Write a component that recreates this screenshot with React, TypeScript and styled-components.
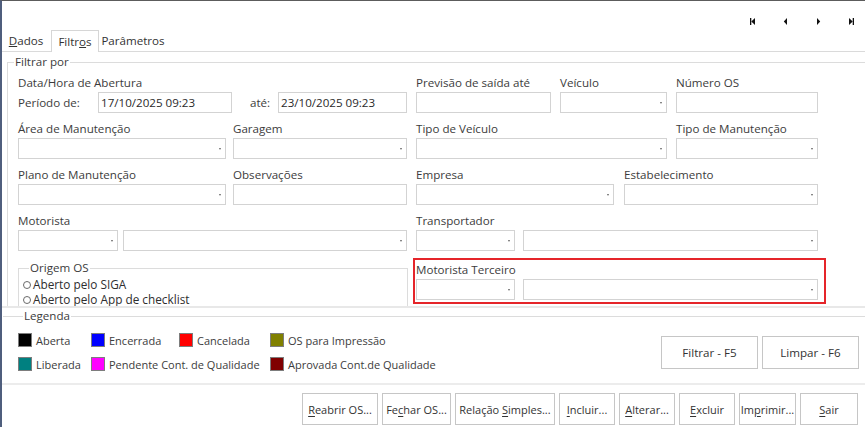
import React from "react";
import styled, { createGlobalStyle } from "styled-components";

const Global = createGlobalStyle`
  html, body { margin: 0; padding: 0; background: #fff; }
  body {
    font-family: "Open Sans", "Noto Sans", sans-serif;
    font-size: 11.6px;
    color: #3c3c3c;
  }
  * { box-sizing: border-box; }
`;

const Window = styled.div`
  width: 865px;
  height: 427px;
  overflow: hidden;
  background: #fff;
  border-top: 1px solid #5c5c5c;
  border-left: 2px solid #4f5e7d;
  display: flex;
  flex-direction: column;
`;

const TopBar = styled.div`
  height: 29px;
  flex: none;
  display: flex;
  justify-content: flex-end;
  align-items: flex-start;
  padding: 17px 11px 0 0;
  gap: 28px;
`;

const NavIcon = styled.svg`
  width: 5px;
  height: 7px;
  display: block;
`;

const TabStrip = styled.div`
  height: 22px;
  flex: none;
  display: flex;
  align-items: flex-end;
  border-bottom: 1px solid #dadada;
`;

const Tab = styled.div<{ $active?: boolean; $w: number }>`
  width: ${(p) => p.$w}px;
  height: ${(p) => (p.$active ? 22 : 21)}px;
  margin-left: ${(p) => (p.$active ? 1 : 0)}px;
  margin-bottom: ${(p) => (p.$active ? -1 : 0)}px;
  display: flex;
  align-items: center;
  justify-content: center;
  background: #fff;
  color: #333;
  border: ${(p) => (p.$active ? "1px solid #d6d6d6" : "none")};
  border-bottom: none;
  line-height: 16px;
  padding-top: 1px;
`;

const FilterPanel = styled.div`
  height: 256px;
  flex: none;
  overflow: hidden;
  padding-left: 5px;
  border-bottom: 2px solid #e8e8e8;
`;

const GroupBox = styled.fieldset`
  margin: 2px 0 0 0;
  padding: 0;
  min-width: 0;
  border: 1px solid #dcdcdc;
  border-right: none;
  height: 300px;
`;

const GroupTitle = styled.legend<{ $ml?: number }>`
  margin-left: ${(p) => p.$ml ?? 6}px;
  padding: 0 1px;
  line-height: 16px;
  color: #3c3c3c;
`;

const FieldGrid = styled.div`
  display: grid;
  grid-template-columns: 390px 402px;
  column-gap: 8px;
  row-gap: 7px;
  padding: 4px 0 0 10px;
`;

const FieldRow = styled.div<{ $gap: number }>`
  display: flex;
  align-items: flex-end;
  gap: ${(p) => p.$gap}px;
`;

const Field = styled.div<{ $w: number }>`
  width: ${(p) => p.$w}px;
  display: flex;
  flex-direction: column;
`;

const Label = styled.div`
  height: 18px;
  line-height: 18px;
  white-space: nowrap;
  color: #3c3c3c;
`;

const TextBox = styled.div`
  height: 21px;
  border: 1px solid #d3d3d3;
  background: #fff;
  display: flex;
  align-items: center;
  padding-left: 2px;
  color: #2a2a2a;
  white-space: nowrap;
`;

const Combo = styled.div`
  height: 21px;
  border: 1px solid #d3d3d3;
  background: #fff;
  display: flex;
  align-items: center;
  justify-content: flex-end;
  padding-right: 4px;
`;

const Arrow = styled.span`
  width: 0;
  height: 0;
  border-left: 1.5px solid transparent;
  border-right: 1.5px solid transparent;
  border-top: 2px solid #606060;
`;

const PeriodRow = styled.div`
  display: flex;
  align-items: center;
  height: 21px;
`;

const InlineLabel = styled.span<{ $w: number; $ml?: number }>`
  width: ${(p) => p.$w}px;
  margin-left: ${(p) => p.$ml ?? 0}px;
  flex: none;
  white-space: nowrap;
`;

const SizedBox = styled(TextBox)<{ $w: number }>`
  width: ${(p) => p.$w}px;
  flex: none;
`;

const OriginBox = styled.fieldset`
  margin: 2px 0 0 0;
  padding: 1px 0 0 4px;
  min-width: 0;
  width: 390px;
  height: 60px;
  border: 1px solid #dcdcdc;
`;

const RadioLine = styled.label`
  display: flex;
  align-items: center;
  gap: 2px;
  height: 15px;
  line-height: 15px;
  font-size: 11.8px;
  color: #2e2e2e;
  white-space: nowrap;
`;

const RadioDot = styled.span`
  width: 8px;
  height: 8px;
  border-radius: 50%;
  border: 1px solid #6a6a6a;
  background: #fff;
  flex: none;
`;

const Highlight = styled.div`
  margin-left: -3px;
  width: 413px;
  height: 46px;
  border: 2px solid #e5252a;
  padding: 1px 0 2px 1px;
  display: flex;
  flex-direction: column;
`;

const LegendSection = styled.div`
  height: 77px;
  flex: none;
  border-bottom: 2px solid #ececec;
`;

const LegendBox = styled.fieldset`
  margin: 0 0 0 1px;
  padding: 8px 6px 0 15px;
  min-width: 0;
  border: none;
  border-top: 1px solid #dcdcdc;
  display: flex;
  justify-content: space-between;
  align-items: flex-start;
`;

const LegendGrid = styled.div`
  display: grid;
  grid-template-columns: 73px 88px 91px auto;
  row-gap: 8px;
  font-size: 11px;
`;

const LegendItem = styled.div<{ $col?: number }>`
  display: flex;
  align-items: center;
  gap: 4px;
  height: 16px;
  white-space: nowrap;
  grid-column: ${(p) => (p.$col ? p.$col : "auto")};
`;

const Swatch = styled.span<{ $c: string }>`
  width: 14px;
  height: 14px;
  flex: none;
  background: ${(p) => p.$c};
  border: 1px solid #7d7d7d;
`;

const ActionGroup = styled.div`
  display: flex;
  gap: 4px;
  margin-top: 4px;
`;

const Button = styled.button<{ $w: number; $h?: number; $fs?: number }>`
  width: ${(p) => p.$w}px;
  height: ${(p) => p.$h ?? 32}px;
  padding: 0;
  border: 1px solid #c6c6c6;
  background: #fff;
  font-family: inherit;
  font-size: ${(p) => p.$fs ?? 11}px;
  color: #333;
  white-space: nowrap;
  cursor: default;
  u { text-decoration: underline; text-underline-offset: 2px; }
`;

const BottomBar = styled.div`
  display: flex;
  justify-content: flex-end;
  gap: 4px;
  padding: 8px 7px 0 0;
`;

const ComboField = ({ w, label }: { w: number; label?: string }) => (
  <Field $w={w}>
    <Label>{label ?? ""}</Label>
    <Combo>
      <Arrow />
    </Combo>
  </Field>
);

const TextField = ({ w, label }: { w: number; label?: string }) => (
  <Field $w={w}>
    <Label>{label ?? ""}</Label>
    <TextBox />
  </Field>
);

const legend = [
  { c: "#000000", t: "Aberta" },
  { c: "#0000ff", t: "Encerrada" },
  { c: "#ff0000", t: "Cancelada" },
  { c: "#808000", t: "OS para Impressão" },
  { c: "#008080", t: "Liberada" },
  { c: "#ff00ff", t: "Pendente Cont. de Qualidade" },
  { c: "#800000", t: "Aprovada Cont.de Qualidade", col: 4 },
];

export default function App() {
  return (
    <>
      <Global />
      <Window>
        <TopBar>
          <NavIcon viewBox="0 0 5 7">
            <rect x="0" y="0" width="1.3" height="7" fill="#111" />
            <polygon points="5,0 1.3,3.5 5,7" fill="#111" />
          </NavIcon>
          <NavIcon viewBox="0 0 5 7">
            <polygon points="4,0 0.8,3.5 4,7" fill="#111" />
          </NavIcon>
          <NavIcon viewBox="0 0 5 7">
            <polygon points="1,0 4.2,3.5 1,7" fill="#111" />
          </NavIcon>
          <NavIcon viewBox="0 0 5 7">
            <polygon points="0,0 3.7,3.5 0,7" fill="#111" />
            <rect x="3.7" y="0" width="1.3" height="7" fill="#111" />
          </NavIcon>
        </TopBar>

        <TabStrip>
          <Tab $w={48}>
            <span>
              <u>D</u>ados
            </span>
          </Tab>
          <Tab $w={48} $active>
            <span>
              Filtr<u>o</u>s
            </span>
          </Tab>
          <Tab $w={68}>Parâmetros</Tab>
        </TabStrip>

        <FilterPanel>
          <GroupBox>
            <GroupTitle $ml={6}>Filtrar por</GroupTitle>
            <FieldGrid>
              <Field $w={390}>
                <Label>Data/Hora de Abertura</Label>
                <PeriodRow>
                  <InlineLabel $w={80}>Período de:</InlineLabel>
                  <SizedBox $w={134}>17/10/2025 09:23</SizedBox>
                  <InlineLabel $w={28} $ml={18}>
                    até:
                  </InlineLabel>
                  <SizedBox $w={129}>23/10/2025 09:23</SizedBox>
                </PeriodRow>
              </Field>
              <FieldRow $gap={9}>
                <TextField w={135} label="Previsão de saída até" />
                <ComboField w={107} label="Veículo" />
                <TextField w={142} label="Número OS" />
              </FieldRow>

              <FieldRow $gap={7}>
                <ComboField w={208} label="Área de Manutenção" />
                <ComboField w={174} label="Garagem" />
              </FieldRow>
              <FieldRow $gap={9}>
                <ComboField w={251} label="Tipo de Veículo" />
                <ComboField w={142} label="Tipo de Manutenção" />
              </FieldRow>

              <FieldRow $gap={7}>
                <ComboField w={208} label="Plano de Manutenção" />
                <TextField w={174} label="Observações" />
              </FieldRow>
              <FieldRow $gap={10}>
                <ComboField w={198} label="Empresa" />
                <ComboField w={194} label="Estabelecimento" />
              </FieldRow>

              <FieldRow $gap={5}>
                <ComboField w={100} label="Motorista" />
                <ComboField w={284} />
              </FieldRow>
              <FieldRow $gap={8}>
                <ComboField w={99} label="Transportador" />
                <ComboField w={295} />
              </FieldRow>

              <div>
                <OriginBox>
                  <GroupTitle $ml={6}>Origem OS</GroupTitle>
                  <RadioLine>
                    <RadioDot />
                    Aberto pelo SIGA
                  </RadioLine>
                  <RadioLine>
                    <RadioDot />
                    Aberto pelo App de checklist
                  </RadioLine>
                </OriginBox>
              </div>
              <Highlight>
                <Label>Motorista Terceiro</Label>
                <FieldRow $gap={8}>
                  <Field $w={99}>
                    <Combo>
                      <Arrow />
                    </Combo>
                  </Field>
                  <Field $w={295}>
                    <Combo>
                      <Arrow />
                    </Combo>
                  </Field>
                </FieldRow>
              </Highlight>
            </FieldGrid>
          </GroupBox>
        </FilterPanel>

        <LegendSection>
          <LegendBox>
            <GroupTitle $ml={5}>Legenda</GroupTitle>
            <LegendGrid>
              {legend.map((l) => (
                <LegendItem key={l.t} $col={l.col}>
                  <Swatch $c={l.c} />
                  {l.t}
                </LegendItem>
              ))}
            </LegendGrid>
            <ActionGroup>
              <Button $w={97} $h={33} $fs={11.6}>
                Filtrar - F5
              </Button>
              <Button $w={97} $h={33} $fs={11.6}>
                Limpar - F6
              </Button>
            </ActionGroup>
          </LegendBox>
        </LegendSection>

        <BottomBar>
          <Button $w={76}>
            <u>R</u>eabrir OS...
          </Button>
          <Button $w={69}>
            Fe<u>c</u>har OS...
          </Button>
          <Button $w={100}>
            Relação <u>S</u>imples...
          </Button>
          <Button $w={56}>
            <u>I</u>ncluir...
          </Button>
          <Button $w={56}>
            <u>A</u>lterar...
          </Button>
          <Button $w={56}>
            <u>E</u>xcluir
          </Button>
          <Button $w={57}>
            Im<u>p</u>rimir...
          </Button>
          <Button $w={58}>
            <u>S</u>air
          </Button>
        </BottomBar>
      </Window>
    </>
  );
}
